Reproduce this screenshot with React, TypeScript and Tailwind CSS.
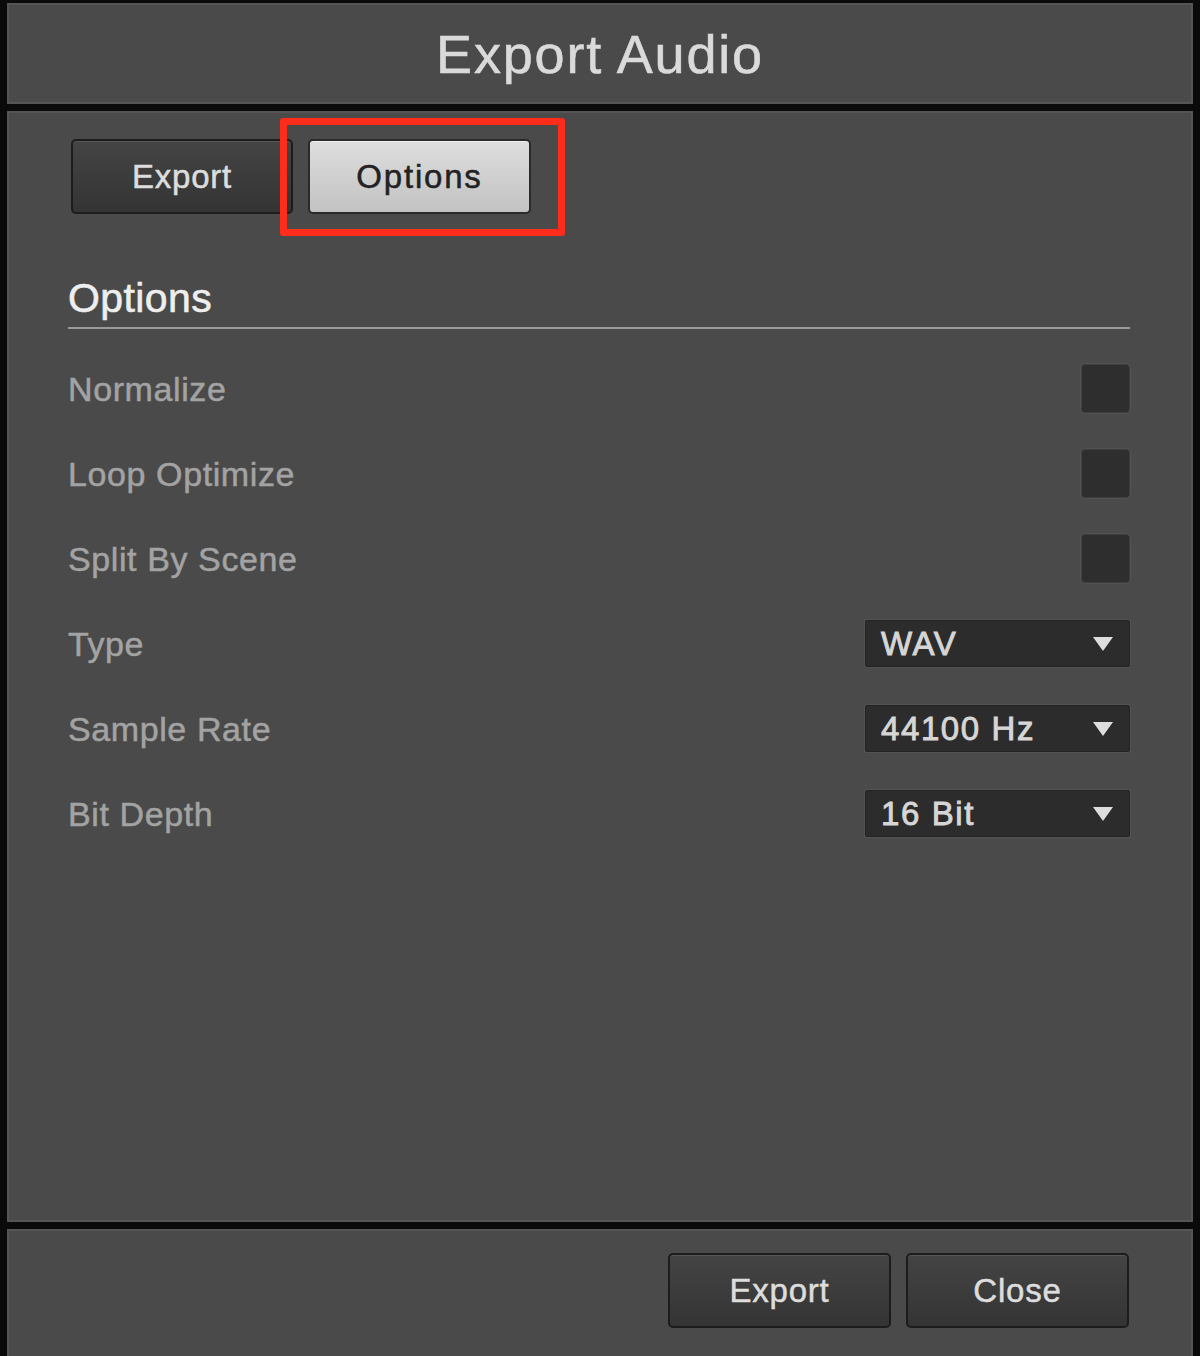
import React from "react";

const font = { fontFamily: '"Liberation Sans", Arial, sans-serif' };

function Checkbox() {
  return (
    <div className="w-[49px] h-[49px] rounded-[4px] bg-[#2e2e2e] border border-[#3d3d3d] shadow-[0_0_0_1px_#525252]" />
  );
}

function Select({ value }: { value: string }) {
  return (
    <div className="w-[265px] h-[47px] bg-[#2c2c2c] border border-[#232323] rounded-[2px] flex items-center justify-between pl-[15px] pr-[15px] shadow-[0_0_0_1px_#535353]">
      <span className="text-[33px] tracking-[1.6px] text-[#d6d6d6] leading-none [-webkit-text-stroke:0.9px_#d6d6d6]">{value}</span>
      <svg width="22" height="16" viewBox="0 0 22 16">
        <polygon points="1,1 21,1 11,15" fill="#dedede" />
      </svg>
    </div>
  );
}

function Row({ label, children }: { label: string; children: React.ReactNode }) {
  return (
    <div className="h-[85px] flex items-center justify-between">
      <span className="text-[34px] tracking-[0.6px] text-[#a3a3a3] leading-none [-webkit-text-stroke:0.5px_#a3a3a3]">{label}</span>
      {children}
    </div>
  );
}

function DarkButton({ label, className = "" }: { label: string; className?: string }) {
  return (
    <div
      className={`h-[75px] rounded-[5px] border-2 border-[#1c1c1c] bg-gradient-to-b from-[#444444] to-[#343434] shadow-[inset_0_1px_0_#565656] flex items-center justify-center text-[33px] tracking-[0.8px] text-[#dddddd] [-webkit-text-stroke:0.5px_#dddddd] ${className}`}
    >
      {label}
    </div>
  );
}

export default function App() {
  return (
    <div style={font} className="w-[1200px] h-[1356px] bg-[#0a0a0a] flex flex-col pt-[3px] pl-[7px] pr-[7px]">
      {/* title bar */}
      <div className="h-[101px] bg-[#4a4a4a] border-2 border-[#555555] flex items-center justify-center">
        <span className="text-[54px] tracking-[1.8px] text-[#dadada] leading-none [-webkit-text-stroke:0.6px_#dadada]">Export Audio</span>
      </div>

      {/* options panel */}
      <div className="mt-[7px] h-[1111px] bg-[#4a4a4a] border-2 border-[#555555] pt-[26px] pl-[59px] pr-[61px]">
        <div className="relative flex gap-[15px] pl-[3px]">
          <DarkButton label="Export" className="w-[222px]" />
          <div className="w-[223px] h-[75px] rounded-[5px] border-2 border-[#2a2a2a] bg-gradient-to-b from-[#dedede] to-[#c2c2c2] shadow-[inset_0_1px_0_#f0f0f0] flex items-center justify-center text-[33px] tracking-[1.8px] text-[#222222] [-webkit-text-stroke:0.5px_#222222]">
            Options
          </div>
          <div className="absolute left-[212px] top-[-21px] w-[285px] h-[118px] border-[7px] border-[#fe2c1b] rounded-[3px]" />
        </div>

        <div className="mt-[64px] text-[41px] tracking-[0.4px] leading-none text-[#eeeeee] [-webkit-text-stroke:0.6px_#eeeeee]">Options</div>
        <div className="mt-[8px] h-[2px] bg-[#9a9a9a]" />

        <div className="mt-[17px] flex flex-col">
          <Row label="Normalize"><Checkbox /></Row>
          <Row label="Loop Optimize"><Checkbox /></Row>
          <Row label="Split By Scene"><Checkbox /></Row>
          <Row label="Type"><Select value="WAV" /></Row>
          <Row label="Sample Rate"><Select value="44100 Hz" /></Row>
          <Row label="Bit Depth"><Select value="16 Bit" /></Row>
        </div>
      </div>

      {/* footer */}
      <div className="mt-[7px] flex-1 bg-[#4a4a4a] border-2 border-[#555555] border-b-0 pt-[22px] pr-[62px] flex justify-end gap-[15px]">
        <DarkButton label="Export" className="w-[223px]" />
        <DarkButton label="Close" className="w-[223px]" />
      </div>
    </div>
  );
}
